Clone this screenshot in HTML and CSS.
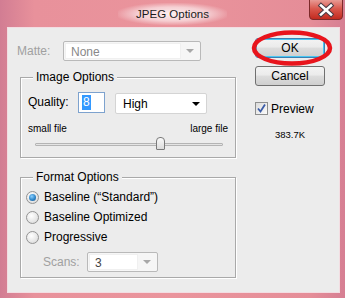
FILE: index.html
```html
<!DOCTYPE html>
<html>
<head>
<meta charset="utf-8">
<link rel="stylesheet" href="styles.css">
</head>
<body>
<div class="window">
  <div class="titlebar">
    <span class="title">JPEG Options</span>
    <div class="close">
      <svg width="34" height="20" viewBox="0 0 34 20">
        <defs>
          <linearGradient id="cg" x1="0" y1="0" x2="0" y2="1">
            <stop offset="0" stop-color="#e89a94"/>
            <stop offset="0.45" stop-color="#d9574c"/>
            <stop offset="1" stop-color="#c2281d"/>
          </linearGradient>
        </defs>
        <path d="M0.5 0 V16 Q0.5 19.5 4 19.5 H30 Q33.5 19.5 33.5 16 V0" fill="url(#cg)" stroke="#7c2a2a"/>
        <path d="M12 5.5 L22 14.5 M22 5.5 L12 14.5" stroke="#4a3a44" stroke-width="4.6" stroke-linecap="square"/>
        <path d="M12 5.5 L22 14.5 M22 5.5 L12 14.5" stroke="#ffffff" stroke-width="2.6" stroke-linecap="square"/>
      </svg>
    </div>
  </div>
  <div class="client">
    <div class="left">
      <div class="matte-row">
        <span class="matte-label">Matte:</span>
        <div class="combo combo-disabled matte-combo">
          <span class="combo-field">None</span>
          <span class="combo-arrow"><i class="tri tri-gray"></i></span>
        </div>
      </div>

      <div class="group image-group">
        <span class="group-title">Image Options</span>
        <div class="quality-row">
          <span class="quality-label">Quality:</span>
          <div class="num-input"><span class="sel">8</span></div>
          <div class="combo high-combo">
            <span class="combo-field plain">High</span>
            <span class="combo-arrow"><i class="tri"></i></span>
          </div>
        </div>
        <div class="slider-labels">
          <span>small file</span>
          <span>large file</span>
        </div>
        <div class="slider">
          <div class="track"></div>
          <div class="thumb"></div>
        </div>
      </div>

      <div class="group format-group">
        <span class="group-title">Format Options</span>
        <div class="radio-row"><span class="radio checked"></span><span>Baseline (“Standard”)</span></div>
        <div class="radio-row"><span class="radio"></span><span>Baseline Optimized</span></div>
        <div class="radio-row"><span class="radio"></span><span>Progressive</span></div>
        <div class="scans-row">
          <span class="scans-label">Scans:</span>
          <div class="combo combo-disabled scans-combo">
            <span class="combo-field dark">3</span>
            <span class="combo-arrow"><i class="tri tri-gray"></i></span>
          </div>
        </div>
      </div>
    </div>

    <div class="right">
      <div class="btn btn-default">OK
        <svg class="mark" width="84" height="38" viewBox="0 0 84 38">
          <ellipse cx="41" cy="18" rx="38" ry="15.5" fill="none" stroke="#e8141c" stroke-width="4.5"/>
        </svg>
      </div>
      <div class="btn btn-cancel">Cancel</div>
      <div class="check-row">
        <span class="checkbox">
          <svg width="11" height="11" viewBox="0 0 11 11"><path d="M2 5.5 L4.5 8.5 L9 1.5" fill="none" stroke="#3b5ca8" stroke-width="1.8"/></svg>
        </span>
        <span>Preview</span>
      </div>
      <div class="size">383.7K</div>
    </div>
  </div>
</div>
</body>
</html>
```

FILE: styles.css
```css
* { box-sizing: border-box; }

body {
  margin: 0;
  width: 345px;
  height: 298px;
  overflow: hidden;
  font-family: "Liberation Sans", Arial, sans-serif;
  font-size: 12px;
  color: #000;
  background: #e9929b;
}

.window {
  width: 345px;
  height: 298px;
  display: flex;
  flex-direction: column;
  background: linear-gradient(90deg, #d27d93 0%, #e8919b 10%, #ea949c 50%, #e58d98 90%, #d67f93 100%);
}

.titlebar {
  height: 28px;
  position: relative;
  display: flex;
  justify-content: center;
  align-items: center;
}

.title {
  font-size: 11.5px;
  padding: 5px 18px;
  color: #1a1a1a;
  background: radial-gradient(ellipse at center, rgba(255,255,255,0.85) 0%, rgba(255,255,255,0.55) 45%, rgba(255,255,255,0) 75%);
}

.close {
  position: absolute;
  right: 2px;
  top: 0;
  width: 34px;
  height: 20px;
  line-height: 0;
}

.client {
  margin: 0 6px 6px 8px;
  flex: 1;
  background: #ececec;
  display: flex;
  box-shadow: 0 0 0 1px #f3dde2;
}

.left {
  width: 240px;
  padding-top: 13px;
}

.matte-row {
  display: flex;
  align-items: center;
  height: 20px;
  padding-left: 9px;
}

.matte-label {
  width: 46px;
  color: #a0a0a0;
}

.combo {
  height: 20px;
  border: 1px solid #b9b9b9;
  border-radius: 2px;
  background: #f6f6f6;
  display: flex;
  padding: 1px;
}

.combo-field {
  flex: 1;
  background: #fff;
  padding-left: 5px;
  line-height: 16px;
  color: #888;
  border: 1px solid #f0f0f0;
}

.combo-field.plain {
  border: none;
  color: #000;
  padding-left: 6px;
  line-height: 18px;
}

.combo-field.dark { color: #444; }

.combo-arrow {
  width: 18px;
  display: flex;
  align-items: center;
  justify-content: center;
}

.tri {
  width: 0;
  height: 0;
  border-left: 4px solid transparent;
  border-right: 4px solid transparent;
  border-top: 4px solid #000;
}

.tri-gray { border-top-color: #a8a8a8; }

.matte-combo { width: 138px; }

.high-combo {
  width: 92px;
  height: 21px;
  background: #fff;
  border-color: #d4d4d4;
  margin-left: 10px;
  margin-top: 1px;
}

.group {
  position: relative;
  margin-left: 12px;
  width: 216px;
  border: 1px solid #a9a9a9;
  box-shadow: inset 1px 1px 0 #fff, 1px 1px 0 #fff;
}

.group-title {
  position: absolute;
  top: -8px;
  left: 12px;
  padding: 0 3px;
  background: #ececec;
  line-height: 14px;
}

.image-group {
  margin-top: 16px;
  height: 81px;
}

.quality-row {
  display: flex;
  align-items: flex-start;
  margin-top: 14px;
  padding-left: 7px;
}

.quality-label {
  width: 50px;
  line-height: 21px;
}

.num-input {
  width: 27px;
  height: 21px;
  border: 1px solid #7da2ce;
  background: #fff;
  padding: 2px 0 0 3px;
}

.sel {
  display: inline-block;
  background: #3399ff;
  color: #fff;
  line-height: 15px;
  padding: 0 1px;
}

.slider-labels {
  display: flex;
  justify-content: space-between;
  padding: 0 7px;
  font-size: 10px;
  line-height: 12px;
  margin-top: 9px;
}

.slider {
  position: relative;
  margin: 2px 0 0 14px;
  width: 188px;
  height: 14px;
}

.track {
  position: absolute;
  left: 0;
  right: 0;
  top: 6px;
  height: 3px;
  border: 1px solid #b4b4b4;
  background: #e4e4e4;
  border-radius: 1px;
}

.thumb {
  position: absolute;
  left: 121px;
  top: 0;
  width: 9px;
  height: 13px;
  border: 1px solid #7a7a7a;
  border-radius: 4px 4px 1px 1px;
  background: linear-gradient(#fafafa, #dcdcdc);
}

.format-group {
  margin-top: 19px;
  height: 101px;
  padding-top: 9px;
}

.radio-row {
  display: flex;
  align-items: center;
  height: 20px;
  padding-left: 5px;
  gap: 5px;
}

.radio {
  width: 13px;
  height: 13px;
  border-radius: 50%;
  border: 1px solid #939393;
  background: radial-gradient(circle at 40% 35%, #ffffff 0%, #e6e6e6 60%, #cfcfcf 100%);
  position: relative;
}

.radio.checked::after {
  content: "";
  position: absolute;
  left: 2px;
  top: 2px;
  width: 7px;
  height: 7px;
  border-radius: 50%;
  background: radial-gradient(circle at 40% 35%, #8cd0ff 0%, #2f86c8 55%, #1a4f86 100%);
}

.scans-row {
  display: flex;
  align-items: center;
  margin-top: 5px;
  padding-left: 22px;
}

.scans-label {
  width: 44px;
  color: #a0a0a0;
}

.scans-combo { width: 71px; }

.right {
  margin-left: 7px;
  padding-top: 10px;
  display: flex;
  flex-direction: column;
  align-items: flex-start;
}

.btn {
  position: relative;
  width: 70px;
  height: 20px;
  border: 1px solid #707070;
  border-radius: 3px;
  background: linear-gradient(#f3f3f3 0%, #ebebeb 45%, #dddddd 50%, #cfcfcf 100%);
  display: flex;
  align-items: center;
  justify-content: center;
}

.btn-default {
  border-color: #3c7fb1;
  box-shadow: inset 0 0 0 1px #48c6f2;
}

.btn-cancel { margin-top: 8px; }

.mark {
  position: absolute;
  left: -5px;
  top: -9px;
}

.check-row {
  display: flex;
  align-items: center;
  gap: 3px;
  margin-top: 16px;
  height: 13px;
}

.checkbox {
  width: 13px;
  height: 13px;
  border: 1px solid #8e8f8f;
  background: linear-gradient(135deg, #dcdcdc, #fbfbfb);
  display: flex;
  align-items: center;
  justify-content: center;
}

.size {
  margin-top: 14px;
  padding-left: 20px;
  font-size: 9.5px;
  line-height: 12px;
}
```
